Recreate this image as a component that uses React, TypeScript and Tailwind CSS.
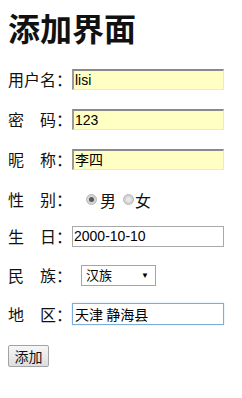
import React from 'react';

const labelFont = { fontFamily: '"Noto Sans CJK SC", "Noto Sans", sans-serif' };
const inputFont = { fontFamily: '"Liberation Sans", "Noto Sans CJK SC", sans-serif' };

const Label: React.FC<{ text: string }> = ({ text }) => (
  <span className="w-[64px] shrink-0 text-[16px] leading-[21px] text-[#111]" style={labelFont}>
    {text}
  </span>
);

const YellowInput: React.FC<{ value: string }> = ({ value }) => (
  <div
    className="w-[152px] h-[21px] bg-[#ffffc4] border-t-2 border-l-2 border-r border-b border-t-[#8a8a8a] border-l-[#9a9a9a] border-r-[#e6e6e6] border-b-[#e6e6e6] pl-[1px] text-[14px] leading-[18px] text-black"
    style={inputFont}
  >
    {value}
  </div>
);

const Radio: React.FC<{ checked?: boolean }> = ({ checked }) => (
  <span className="w-[11px] h-[11px] rounded-full bg-[#d4d4d4] border border-[#b8b8b8] flex items-center justify-center">
    <span className={checked ? 'w-[5px] h-[5px] rounded-full bg-[#5a5a5a]' : 'w-[5px] h-[5px] rounded-full bg-[#e8e8e8]'} />
  </span>
);

export default function App() {
  return (
    <div className="w-[242px] h-[398px] bg-white px-2 flex flex-col">
      <h1 className="mt-[11px] h-[32px] text-[32px] leading-[32px] font-semibold text-[#111]" style={labelFont}>
        添加界面
      </h1>

      <div className="mt-[26px] flex items-center h-[21px]">
        <Label text="用户名：" />
        <YellowInput value="lisi" />
      </div>

      <div className="mt-[19px] flex items-center h-[21px]">
        <Label text="密　码：" />
        <YellowInput value="123" />
      </div>

      <div className="mt-[19px] flex items-center h-[21px]">
        <Label text="昵　称：" />
        <YellowInput value="李四" />
      </div>

      <div className="mt-[19px] flex items-center h-[21px]">
        <Label text="性　别：" />
        <div className="flex items-center ml-[14px] text-[16px] text-[#111]" style={labelFont}>
          <Radio checked />
          <span className="ml-[3px]">男</span>
          <span className="ml-[7px]"><Radio /></span>
          <span className="ml-[1px]">女</span>
        </div>
      </div>

      <div className="mt-[16px] flex items-center h-[21px]">
        <Label text="生　日：" />
        <div
          className="w-[152px] h-[21px] bg-white border border-[#a9a9a9] pl-[1px] text-[14px] leading-[19px] text-black"
          style={inputFont}
        >
          2000-10-10
        </div>
      </div>

      <div className="mt-[18px] flex items-center h-[21px]">
        <Label text="民　族：" />
        <div
          className="ml-[9px] w-[75px] h-[21px] bg-white border border-[#a5a5a5] flex items-center justify-between pl-[4px] pr-[6px] text-[13px] text-black"
          style={inputFont}
        >
          <span>汉族</span>
          <span className="text-[8px] leading-none">▼</span>
        </div>
      </div>

      <div className="mt-[17px] flex items-center h-[22px]">
        <Label text="地　区：" />
        <div
          className="w-[152px] h-[22px] bg-white border border-[#7eadd9] shadow-[0_0_1px_#9cc3e8] pl-[2px] text-[14px] leading-[20px] text-black"
          style={labelFont}
        >
          天津 静海县
        </div>
      </div>

      <div className="mt-[19px]">
        <button
          className="w-[41px] h-[22px] rounded-[2px] border border-[#a3a3a3] bg-gradient-to-b from-[#f6f6f6] to-[#dedede] text-[14px] leading-[20px] text-[#111]"
          style={labelFont}
        >
          添加
        </button>
      </div>
    </div>
  );
}
